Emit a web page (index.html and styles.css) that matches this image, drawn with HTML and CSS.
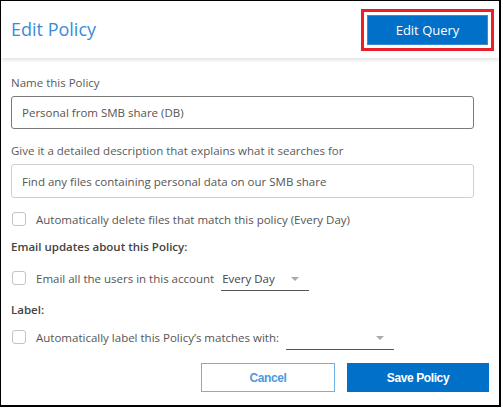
FILE: index.html
```html
<!DOCTYPE html>
<html>
<head>
<meta charset="utf-8">
<link rel="stylesheet" href="styles.css">
</head>
<body>
<div class="frame">
  <header class="header">
    <h1 class="title">Edit Policy</h1>
    <div class="highlight">
      <button class="btn-primary btn-query">Edit Query</button>
    </div>
  </header>
  <div class="form">
    <label class="field-label">Name this Policy</label>
    <div class="input input-dark">Personal from SMB share (DB)</div>
    <label class="field-label field-label-2">Give it a detailed description that explains what it searches for</label>
    <div class="input input-light">Find any files containing personal data on our SMB share</div>

    <div class="check-row row-delete">
      <span class="checkbox"></span>
      <span>Automatically delete files that match this policy (Every Day)</span>
    </div>

    <div class="section-title sec-email">Email updates about this Policy:</div>
    <div class="check-row row-email">
      <span class="checkbox"></span>
      <span>Email all the users in this account</span>
      <span class="select select-day"><span>Every Day</span><span class="caret"></span></span>
    </div>

    <div class="section-title sec-label">Label:</div>
    <div class="check-row row-label">
      <span class="checkbox"></span>
      <span>Automatically label this Policy’s matches with:</span>
      <span class="select select-label"><span></span><span class="caret"></span></span>
    </div>

    <div class="actions">
      <button class="btn-outline">Cancel</button>
      <button class="btn-save">Save Policy</button>
    </div>
  </div>
</div>
</body>
</html>
```
FILE: styles.css
```css
* { box-sizing: border-box; }
html, body { margin: 0; padding: 0; background: #fff; }
body { font-family: "Open Sans", "DejaVu Sans", sans-serif; color: #555; }

.frame {
  width: 501px;
  height: 407px;
  border-style: solid;
  border-color: #000;
  border-width: 1px 2px 2px 1px;
  display: flex;
  flex-direction: column;
}

.header {
  height: 57px;
  display: flex;
  align-items: center;
  justify-content: space-between;
  padding: 0 5px 0 10px;
  box-shadow: 0 2px 4px rgba(0,0,0,0.12);
  position: relative;
}
.title {
  margin: 0;
  font-weight: 400;
  font-size: 18px;
  color: #3a8bd6;
  margin-top: -2px;
}
.highlight {
  border: 3px solid #e8202a;
  padding: 3px;
}
.btn-primary {
  font-family: "Open Sans", sans-serif;
  border: none;
  background: #0070c9;
  color: #fff;
  font-size: 13px;
}
.btn-query {
  width: 121px;
  height: 30px;
  display: block;
  border: 1px solid #3d8ad0;
}

.form {
  padding: 16px 25px 0 10px;
  display: flex;
  flex-direction: column;
  font-size: 11.5px;
}
.field-label { display: block; line-height: 17px; color: #5a5a5a; }
.input {
  margin-top: 5px;
  height: 33px;
  border-radius: 3px;
  padding: 0 10px;
  display: flex;
  align-items: center;
  color: #555;
}
.input-dark { border: 1px solid #7a7a7a; }
.input-light { border: 1px solid #cfcfcf; height: 34px; }
.field-label-2 { margin-top: 13px; }

.check-row {
  display: flex;
  align-items: center;
  height: 20px;
  color: #555;
}
.checkbox {
  width: 14px;
  height: 14px;
  border: 1px solid #c4c4c4;
  border-radius: 3px;
  margin: 0 10px 0 1px;
  flex: none;
}
.row-delete { margin-top: 11px; }
.section-title { font-weight: 600; color: #444; line-height: 17px; }
.sec-email { margin-top: 9px; }
.row-email { margin-top: 13px; }
.sec-label { margin-top: 13px; }
.row-label { margin-top: 9px; }

.select {
  display: flex;
  align-items: center;
  justify-content: space-between;
  border-bottom: 1px solid #555;
  height: 22px;
  margin-top: 4px;
  padding: 0 10px 2px 1px;
  margin-left: 7px;
  color: #444;
}
.select-day { width: 88px; }
.select-label { width: 108px; }
.caret {
  width: 0; height: 0;
  border-left: 4px solid transparent;
  border-right: 4px solid transparent;
  border-top: 4px solid #aaa;
}

.actions {
  display: flex;
  justify-content: flex-end;
  gap: 12px;
  margin-top: 16px;
  margin-right: -15px;
}
.btn-outline, .btn-save {
  font-family: "Liberation Sans", Arial, sans-serif;
  font-weight: 700;
  font-size: 12px;
  letter-spacing: -0.4px;
  height: 29px;
}
.btn-outline {
  width: 134px;
  background: #fff;
  border: 1px solid #6fb2ea;
  color: #4a9ae0;
}
.btn-save {
  width: 142px;
  background: #0070c9;
  border: none;
  color: #fff;
}
```
